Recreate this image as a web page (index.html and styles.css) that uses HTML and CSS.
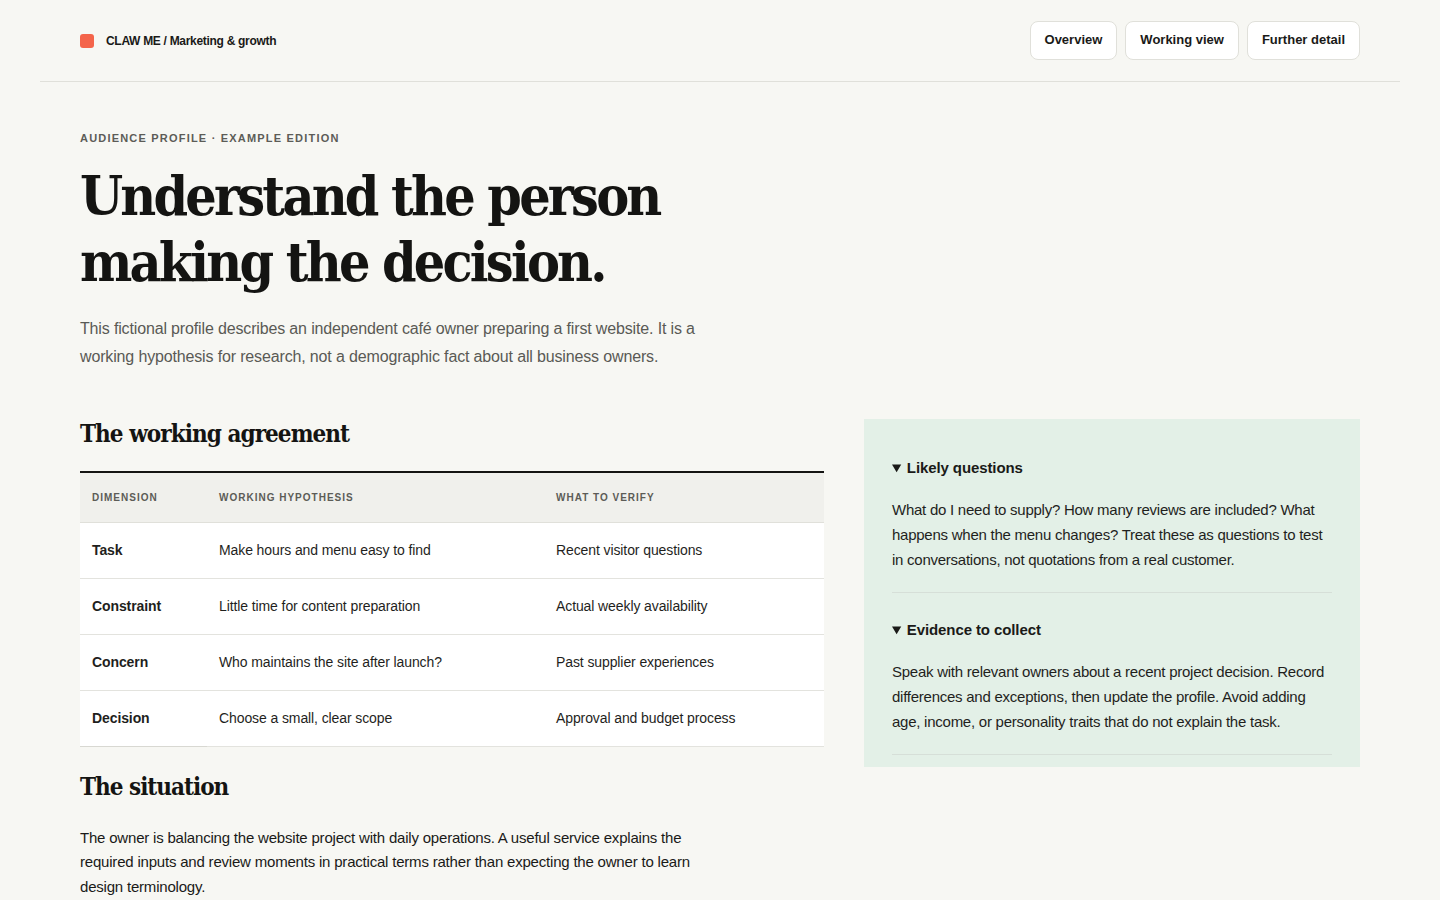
FILE: index.html
```html
<!DOCTYPE html>
<html lang="en">
<head>
<meta charset="utf-8">
<title>Audience profile</title>
<link rel="stylesheet" href="styles.css">
</head>
<body>
<header class="topbar">
  <div class="brand">
    <span class="brand-mark"></span>
    <span class="brand-text">CLAW ME / Marketing &amp; growth</span>
  </div>
  <nav class="nav">
    <a class="nav-btn" href="#">Overview</a>
    <a class="nav-btn" href="#">Working view</a>
    <a class="nav-btn" href="#">Further detail</a>
  </nav>
</header>
<main class="page">
  <section class="hero">
    <p class="eyebrow">AUDIENCE PROFILE · EXAMPLE EDITION</p>
    <h1 class="title">Understand the person making the decision.</h1>
    <p class="lead">This fictional profile describes an independent café owner preparing a first website. It is a working hypothesis for research, not a demographic fact about all business owners.</p>
  </section>
  <div class="columns">
    <div class="main-col">
      <h2 class="section-title">The working agreement</h2>
      <table class="agreement">
        <thead>
          <tr>
            <th class="c1">Dimension</th>
            <th class="c2">Working hypothesis</th>
            <th class="c3">What to verify</th>
          </tr>
        </thead>
        <tbody>
          <tr><th>Task</th><td>Make hours and menu easy to find</td><td>Recent visitor questions</td></tr>
          <tr><th>Constraint</th><td>Little time for content preparation</td><td>Actual weekly availability</td></tr>
          <tr><th>Concern</th><td>Who maintains the site after launch?</td><td>Past supplier experiences</td></tr>
          <tr><th>Decision</th><td>Choose a small, clear scope</td><td>Approval and budget process</td></tr>
        </tbody>
      </table>
      <h2 class="section-title situation">The situation</h2>
      <p class="body-text">The owner is balancing the website project with daily operations. A useful service explains the required inputs and review moments in practical terms rather than expecting the owner to learn design terminology.</p>
    </div>
    <aside class="side">
      <details class="fold" open>
        <summary>Likely questions</summary>
        <p>What do I need to supply? How many reviews are included? What happens when the menu changes? Treat these as questions to test in conversations, not quotations from a real customer.</p>
      </details>
      <details class="fold" open>
        <summary>Evidence to collect</summary>
        <p>Speak with relevant owners about a recent project decision. Record differences and exceptions, then update the profile. Avoid adding age, income, or personality traits that do not explain the task.</p>
      </details>
    </aside>
  </div>
</main>
</body>
</html>
```

FILE: styles.css
```css
* { box-sizing: border-box; }
html, body { margin: 0; padding: 0; }
body {
  background: #f7f7f3;
  color: #1a1a18;
  font-family: "Liberation Sans", Arial, sans-serif;
}
.topbar {
  margin: 0 40px;
  padding: 21px 40px 21px;
  border-bottom: 1px solid #e0e0da;
  display: flex;
  align-items: center;
  justify-content: space-between;
}
.brand { display: flex; align-items: center; gap: 12px; }
.brand-mark {
  width: 14px; height: 14px;
  background: #f4644a;
  border-radius: 3px;
}
.brand-text {
  font-size: 12px;
  font-weight: 700;
  letter-spacing: -0.3px;
  color: #1a1a18;
}
.nav { display: flex; gap: 8px; }
.nav-btn {
  display: block;
  height: 39px;
  line-height: 36px;
  padding: 0 14px;
  border: 1px solid #e0e0da;
  border-radius: 8px;
  background: #ffffff;
  color: #1a1a18;
  font-size: 13px;
  font-weight: 700;
  text-decoration: none;
}
.page { padding: 0 80px 40px; }
.hero { padding-top: 48px; }
.eyebrow {
  margin: 0;
  font-size: 11px;
  font-weight: 700;
  letter-spacing: 1.2px;
  color: #5c5c57;
  line-height: 16px;
}
.title {
  margin: 17px 0 0;
  max-width: 720px;
  font-family: "DejaVu Serif Condensed", "DejaVu Serif", serif;
  font-stretch: condensed;
  font-weight: 700;
  font-size: 55px;
  line-height: 66px;
  letter-spacing: -2.8px;
  color: #141412;
}
.lead {
  margin: 20px 0 0;
  max-width: 640px;
  font-size: 16px;
  line-height: 28px;
  letter-spacing: -0.15px;
  color: #5a5a55;
}
.columns {
  display: grid;
  grid-template-columns: 3fr 2fr;
  gap: 40px;
  margin-top: 48px;
  align-items: start;
}
.section-title {
  margin: 0;
  font-family: "DejaVu Serif Condensed", "DejaVu Serif", serif;
  font-stretch: condensed;
  font-weight: 700;
  font-size: 24px;
  line-height: 30px;
  letter-spacing: -0.95px;
  color: #141412;
}
.agreement {
  margin-top: 22px;
  width: 100%;
  border-collapse: collapse;
  border-top: 2px solid #141412;
  font-size: 14px;
  letter-spacing: -0.1px;
}
.agreement thead th {
  background: #f0f0ec;
  height: 50px;
  padding: 0 12px;
  text-align: left;
  font-size: 10px;
  font-weight: 700;
  letter-spacing: 1px;
  text-transform: uppercase;
  color: #5c5c57;
  border-bottom: 1px solid #e0e0da;
}
.agreement .c1 { width: 127px; }
.agreement .c2 { width: 337px; }
.agreement tbody th,
.agreement tbody td {
  background: #ffffff;
  height: 56px;
  padding: 0 12px;
  text-align: left;
  border-bottom: 1px solid #e3e3de;
  color: #1f1f1d;
}
.agreement tbody th { font-weight: 700; }
.agreement tbody td { font-weight: 400; }
.agreement tbody tr:last-child th { border-bottom-color: #d8d8d2; }
.situation { margin-top: 25px; letter-spacing: -1px; }
.body-text {
  margin: 24px 0 0;
  max-width: 640px;
  font-size: 15px;
  line-height: 24.5px;
  letter-spacing: -0.2px;
  color: #1a1a18;
}
.side {
  background: #e3f0e7;
  padding: 12px 28px;
}
.fold {
  padding: 27px 0 20px;
  border-bottom: 1px solid #d6dfd8;
}
.fold summary {
  font-size: 15px;
  font-weight: 700;
  line-height: 20px;
  color: #1a1a18;
  cursor: pointer;
  letter-spacing: -0.1px;
}
.fold summary::marker { font-size: 14px; }
.fold p {
  margin: 19px 0 0;
  font-size: 15px;
  line-height: 25px;
  color: #1f1f1d;
  letter-spacing: -0.25px;
}
```
